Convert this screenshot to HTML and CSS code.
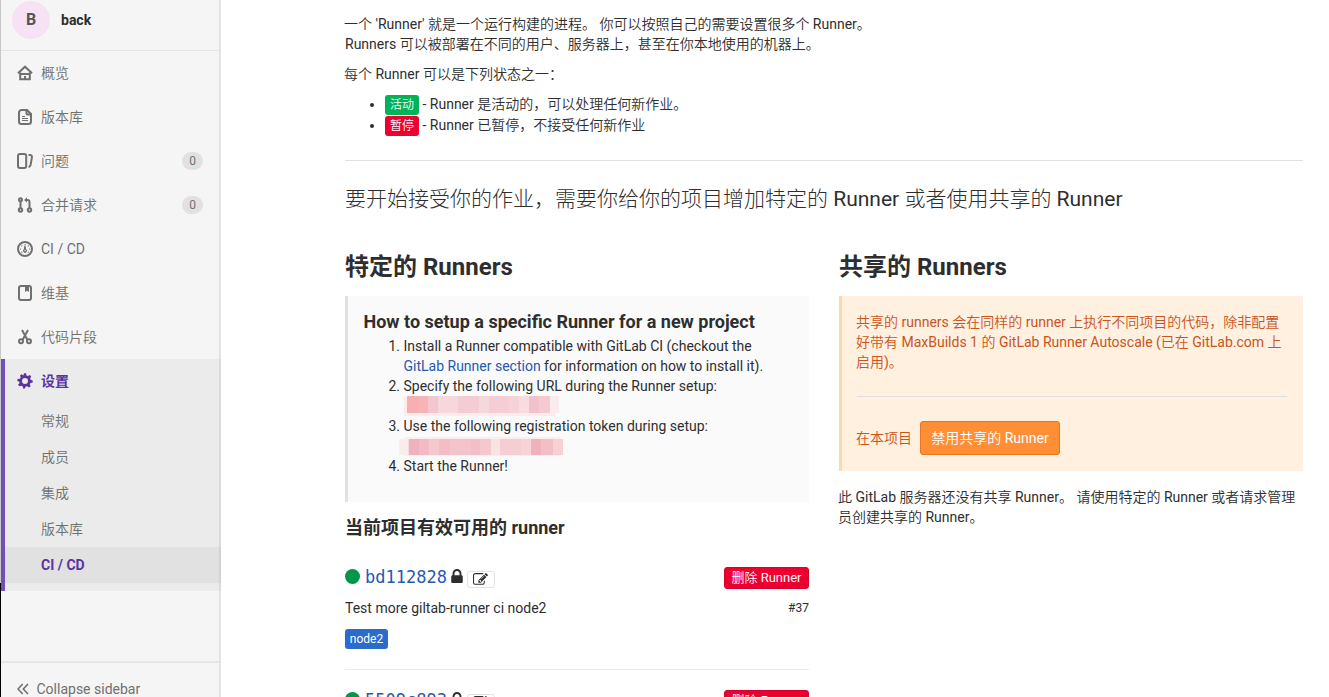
FILE: index.html
```html
<!DOCTYPE html>
<html lang="zh-CN">
<head>
<meta charset="utf-8">
<title>CI / CD</title>
<link rel="stylesheet" href="styles.css">
</head>
<body>
<div class="page">
  <div class="edge"></div>
  <aside class="sidebar">
    <div class="context"><span class="avatar">B</span><strong>back</strong></div>
    <nav class="nav">
      <a class="item"><svg class="icon" viewBox="0 0 16 16"><path d="M1 8.200 8 1.700l7 6.500M3.200 7.500v6.800h9.600V7.500M3.200 9h9.600M8 11v3"/></svg><span>概览</span></a>
      <a class="item"><svg class="icon" viewBox="0 0 16 16"><path d="M4 1h6l4 4v7.500a2.500 2.500 0 0 1-2.500 2.500h-7A2.500 2.500 0 0 1 2 12.500V3.500A2.500 2.500 0 0 1 4.500 1zM9.500 1v3.500a1 1 0 0 0 1 1H14"/><path class="thin" d="M5 7.500h3M5 9.500h6M5 11.500h6"/></svg><span>版本库</span></a>
      <a class="item"><svg class="icon" viewBox="0 0 16 16"><rect x="1" y="1" width="8.200" height="14" rx="2"/><path d="M11.500 2h1.700q2 .3 1.700 2.300l-1.400 8q-.5 1.700-2 1.700"/></svg><span>问题</span><b class="badge">0</b></a>
      <a class="item"><svg class="icon" viewBox="0 0 16 16"><circle cx="3.500" cy="2.700" r="1.500"/><circle cx="3.500" cy="13" r="1.700"/><circle cx="12.500" cy="13" r="1.700"/><path d="M3.500 4v7.500M12.500 11.500V5q0-2-2-2H8.500"/><path class="solid" d="M7 3 10 .5v5z"/></svg><span>合并请求</span><b class="badge">0</b></a>
      <a class="item"><svg class="icon" viewBox="0 0 16 16"><circle cx="8" cy="8" r="7"/><path class="dots" d="M8 3.500h.1M4.800 4.800h.1M11.200 4.800h.1M3.500 8h.1M12.500 8h.1M4.800 11.200h.1M11.200 11.200h.1"/><path class="solid" d="M7.400 4.500h1.200l.5 3.600a2 2 0 1 1-2.200 0z"/><circle class="hole" cx="8" cy="9.500" r=".7"/></svg><span>CI / CD</span></a>
      <a class="item"><svg class="icon" viewBox="0 0 16 16"><rect x="2" y="1" width="12" height="14" rx="2"/><path class="solid" d="M8 1.500h4V7l-2-1.300L8 7z"/></svg><span>维基</span></a>
      <a class="item"><svg class="icon" viewBox="0 0 16 16"><circle cx="4" cy="12.200" r="2"/><circle cx="12" cy="12.200" r="2"/><path d="M5 1 10.500 11M11 1 5.500 11"/></svg><span>代码片段</span></a>
      <div class="active-group">
        <a class="item current"><svg class="icon gear" viewBox="0 0 16 16"><path d="M6.500 2.500 7 .3h2l.5 2.200 1.300.6 2.100-1 1.300 1.400-1.100 2 .5 1.200 2.100.7v2l-2.200.5-.7 1.300.8 2.100-1.600 1.200-1.800-1.300-1.500.3-.8 2H6.100l-.5-2.200-1.300-.6-2.200.6-1-1.700 1.500-1.600-.2-1.300L.3 7.900l.3-2 2.300-.2.800-1.100L3 2.400 4.700 1.300z"/><circle class="gear-hole" cx="8" cy="8" r="3"/></svg><span>设置</span></a>
        <a class="sub">常规</a>
        <a class="sub">成员</a>
        <a class="sub">集成</a>
        <a class="sub">版本库</a>
        <a class="sub selected">CI / CD</a>
      </div>
    </nav>
    <div class="collapse"><svg class="icon chevrons" viewBox="0 0 12 12"><path d="M5.700 1 1 6l4.700 5M11 1 6.300 6l4.700 5"/></svg><span>Collapse sidebar</span></div>
  </aside>
  <main class="content">
    <p class="para"><span class="line l1">一个 'Runner' 就是一个运行构建的进程。 你可以按照自己的需要设置很多个 Runner。</span><span class="line">Runners 可以被部署在不同的用户、服务器上，甚至在你本地使用的机器上。</span></p>
    <p class="para"><span class="line l3">每个 Runner 可以是下列状态之一：</span></p>
    <ul class="states">
      <li><span class="label green">活动</span> - Runner 是活动的，可以处理任何新作业。</li>
      <li><span class="label red">暂停</span> - Runner 已暂停，不接受任何新作业</li>
    </ul>
    <h4 class="lead">要开始接受你的作业，需要你给你的项目增加特定的 Runner 或者使用共享的 Runner</h4>
    <div class="columns">
      <section>
        <h3 class="title">特定的 Runners</h3>
        <div class="callout">
          <h4 class="how">How to setup a specific Runner for a new project</h4>
          <ol class="steps">
            <li>Install a Runner compatible with GitLab CI (checkout the<br><a class="link">GitLab Runner section</a> for information on how to install it).</li>
            <li>Specify the following URL during the Runner setup:<div class="mask url"></div></li>
            <li>Use the following registration token during setup:<div class="mask token"></div></li>
            <li>Start the Runner!</li>
          </ol>
        </div>
        <h4 class="available">当前项目有效可用的 runner</h4>
        <div class="runner">
          <div class="runner-head"><i class="dot"></i><a class="hash">bd112828</a><svg class="lock" viewBox="0 0 1152 1408"><path d="M320 640h512V448q0-106-75-181t-181-75-181 75-75 181v192zm832 96v576q0 40-28 68t-68 28H96q-40 0-68-28t-28-68V736q0-40 28-68t68-28h32V448q0-184 132-316T576 0t316 132 132 316v192h32q40 0 68 28t28 68z"/></svg><a class="edit"><svg viewBox="0 0 1792 1792"><path d="M888 1184l116-116-152-152-116 116v56h96v96h56zm440-720q-16-16-33 1l-350 350q-17 17-1 33t33-1l350-350q17-17 1-33zm80 594v190q0 119-84.500 203.500t-203.500 84.500h-832q-119 0-203.500-84.500t-84.500-203.500v-832q0-119 84.500-203.500t203.500-84.500h832q63 0 117 25 15 7 18 23 3 17-9 29l-49 49q-14 14-32 8-23-6-45-6h-832q-66 0-113 47t-47 113v832q0 66 47 113t113 47h832q66 0 113-47t47-113v-126q0-13 9-22l64-64q15-15 35-7t20 29zm-96-738l288 288-672 672h-288v-288zm444 132l-92 92-288-288 92-92q28-28 68-28t68 28l152 152q28 28 28 68t-28 68z"/></svg></a><a class="remove">删除 Runner</a></div>
          <div class="runner-desc"><span>Test more giltab-runner ci node2</span><small>#37</small></div>
          <span class="tag">node2</span>
        </div>
        <div class="runner">
          <div class="runner-head"><i class="dot"></i><a class="hash">5509c893</a><svg class="lock" viewBox="0 0 1152 1408"><path d="M320 640h512V448q0-106-75-181t-181-75-181 75-75 181v192zm832 96v576q0 40-28 68t-68 28H96q-40 0-68-28t-28-68V736q0-40 28-68t68-28h32V448q0-184 132-316T576 0t316 132 132 316v192h32q40 0 68 28t28 68z"/></svg><a class="edit"><svg viewBox="0 0 1792 1792"><path d="M888 1184l116-116-152-152-116 116v56h96v96h56zm440-720q-16-16-33 1l-350 350q-17 17-1 33t33-1l350-350q17-17 1-33zm80 594v190q0 119-84.500 203.500t-203.500 84.500h-832q-119 0-203.500-84.500t-84.500-203.500v-832q0-119 84.500-203.500t203.500-84.500h832q63 0 117 25 15 7 18 23 3 17-9 29l-49 49q-14 14-32 8-23-6-45-6h-832q-66 0-113 47t-47 113v832q0 66 47 113t113 47h832q66 0 113-47t47-113v-126q0-13 9-22l64-64q15-15 35-7t20 29zm-96-738l288 288-672 672h-288v-288zm444 132l-92 92-288-288 92-92q28-28 68-28t68 28l152 152q28 28 28 68t-28 68z"/></svg></a><a class="remove">删除 Runner</a></div>
        </div>
      </section>
      <section>
        <h3 class="title">共享的 Runners</h3>
        <div class="callout warning">
          <p class="warn-text"><span class="line w">共享的 runners 会在同样的 runner 上执行不同项目的代码，除非配置</span><span class="line w">好带有 MaxBuilds 1 的 GitLab Runner Autoscale (已在 GitLab.com 上</span><span class="line w">启用)。</span></p>
          <div class="toggle"><span class="w">在本项目</span><a class="disable">禁用共享的 Runner</a></div>
        </div>
        <p class="note"><span class="line n">此 GitLab 服务器还没有共享 Runner。 请使用特定的 Runner 或者请求管理</span><span class="line n">员创建共享的 Runner。</span></p>
      </section>
    </div>
  </main>
</div>
</body>
</html>
```
FILE: styles.css
```css
* { box-sizing: border-box; }
body { margin: 0; background: #fff; color: #2e2e2e; font: 14px/20px Roboto, "Noto Sans CJK SC DemiLight", "Noto Sans CJK SC", sans-serif; }
h3, h4, p, ul, ol { margin: 0; padding: 0; }
.page { display: flex; height: 697px; overflow: hidden; }
.edge { width: 1px; flex: none; background: linear-gradient(#c8c8c8 583px, #000 583px); }

.sidebar { width: 220px; flex: none; display: flex; flex-direction: column; background: #f5f5f5; box-shadow: inset -2px 0 0 #e4e4e4; color: #707070; }
.context { height: 51px; flex: none; display: flex; align-items: flex-start; padding-left: 11px; border-bottom: 1px solid #e5e5e5; margin-right: 2px; color: #2e2e2e; }
.context strong { margin: 10px 0 0 11px; font-weight: 700; }
.avatar { width: 38px; height: 38px; margin-top: 1px; border-radius: 50%; background: #f6e1f5; color: #555; font-size: 16px; font-weight: 700; line-height: 37px; text-align: center; }
.nav { height: 610px; flex: none; }
.item { height: 44px; display: flex; align-items: center; padding: 0 18px 0 16px; }
.item span { margin-left: 8px; }
.badge { margin-left: auto; min-width: 21px; height: 18px; border-radius: 9px; background: #e1e1e1; font-size: 12px; font-weight: 400; line-height: 18px; text-align: center; }
.icon { width: 16px; height: 16px; flex: none; fill: none; stroke: #707070; stroke-width: 2; }
.icon .thin { stroke-width: 1; }
.icon .solid { fill: #707070; stroke: none; }
.icon .dots { stroke-width: 1.200; stroke-linecap: round; }
.icon .hole { fill: #f5f5f5; stroke: none; }
.active-group { height: 232px; background: rgba(0, 0, 0, .04); border-left: 4px solid #6e4fbb; }
.active-group .item { padding-left: 12px; }
.current, .selected { color: #5b33a0; font-family: Roboto, "Noto Sans CJK SC", sans-serif; font-weight: 700; }
.gear { fill: #5b33a0; stroke: none; }
.gear-hole { fill: #ebebeb; }
.sub { display: block; height: 36px; padding-left: 36px; line-height: 36px; }
.selected { background: rgba(0, 0, 0, .04); }
.collapse { height: 54px; flex: none; display: flex; align-items: center; gap: 7.500px; padding: 0 0 0 16px; margin-right: 2px; border-top: 2px solid #e5e5e5; }
.chevrons { width: 12px; height: 12px; stroke-width: 1.600; }

.content { width: 958px; flex: none; margin-left: 124px; padding-top: 14px; }
.para { margin-bottom: 10px; }
.line { display: block; white-space: nowrap; }
.l1, .l3, .n, .w { margin-left: -1px; }
.states { padding: 0 0 24px 40px; border-bottom: 1px solid #e1e1e1; }
.states li { height: 21px; white-space: nowrap; }
.label { display: inline-block; height: 20px; margin-top: 1px; margin-bottom: -1px; border-radius: 3px; color: #fff; font-size: 12px; line-height: 21px; vertical-align: top; width: 34px; text-align: center; }
.green { background: #00b35a; }
.red { background: #ed0030; }
.lead { margin-top: 26px; font-family: Roboto, "Noto Sans CJK SC Light", "Noto Sans CJK SC", sans-serif; font-size: 21px; font-weight: 400; line-height: 24px; white-space: nowrap; }
.columns { display: grid; grid-template-columns: 464px 464px; gap: 30px; margin-top: 40px; }
.title, .available { font-family: Roboto, "Noto Sans CJK SC", sans-serif; font-weight: 700; }
.title { font-size: 24px; line-height: 32px; }
.callout { height: 206px; margin-top: 13px; padding: 15px 16px 0 15.500px; border-left: 3px solid #e1e1e1; background: #fafafa; }
.how { font-size: 18px; line-height: 22px; font-weight: 700; }
.steps { padding: 3px 0 0 40px; white-space: nowrap; }
.link, .hash { color: #2659b0; }
.mask { width: 160px; height: 20px; margin-left: -4.500px; }
.url { background: linear-gradient(90deg, transparent 8px, #f6b0b4 8px 19px, #f7b4b7 19px 29px, #f2c7cd 29px 39px, #f6d8dc 39px 59px, #f4cdd4 59px 80px, #f5d8dc 80px 90px, #f5cdd4 90px 110px, #f6d3d8 110px 120px, #f9dcdf 120px 130px, #f2c1cb 130px 140px, #f4c9cf 140px 151px, #f9ecec 151px) 0 0 / 160px 17px no-repeat, linear-gradient(#fdecea, #fdecea) 5px 1px / 152px 19px no-repeat; }
.token { width: 164px; background: linear-gradient(90deg, #f9ecec 9px, #f6dadd 9px 10px, #eeb2bf 10px 20px, #f1bac5 20px 30px, #f3c9cf 30px 40px, #f2bdc7 40px 51px, #f3c4cc 51px 72px, #f2bec8 72px 81px, #f5c8cf 81px 92px, #f8e2e4 92px 101px, #f5ced3 101px 122px, #f6d3d7 122px 132px, #efb1bc 132px 142px, #f3bfc6 142px 154px, #f6d1d5 154px) 0 3px / 164px 16px no-repeat, linear-gradient(#fdecea, #fdecea) 6px 1px / 156px 19px no-repeat; }
.available { margin-top: 15px; font-size: 18px; line-height: 22px; }
.runner { height: 123px; border-bottom: 1px solid #ebebeb; }
.available + .runner { margin-top: 8px; }
.runner-head { height: 40px; padding-top: 19px; display: flex; align-items: flex-start; }
.dot { width: 15px; height: 15px; margin: 3px 5px 0 0; border-radius: 50%; background: #00964b; }
.hash { margin-top: 1px; font: 17px/20px "DejaVu Sans Mono", monospace; }
.lock { width: 12px; height: 14px; margin: 3px 4px 0; fill: #2e2e2e; }
.edit { width: 28px; height: 17px; margin-top: 5px; border: 1px solid #e3e3e3; border-radius: 3px; display: flex; justify-content: center; align-items: center; }
.edit svg { width: 15px; height: 15px; fill: #2e2e2e; }
.remove { width: 85px; height: 22px; margin: 1px 0 0 auto; border: 1px solid #cf0530; border-radius: 3px; background: #ed0030; color: #fff; font-size: 13px; line-height: 20px; text-align: center; white-space: nowrap; }
.runner-desc { display: flex; justify-content: space-between; margin-top: 11px; }
.runner-desc small { font-size: 12px; line-height: 21px; }
.tag { display: block; width: 43px; height: 20px; margin-top: 10px; border-radius: 3px; background: #2b6bcb; color: #fff; font-size: 12px; line-height: 20px; text-align: center; }
.warning { height: 175px; padding-top: 16px; padding-left: 15px; border-color: #fcd9a8; background: #fff0e0; color: #c9541c; }
.warn-text { padding-bottom: 24px; border-bottom: 1px solid #dfdfdf; }
.toggle { display: flex; align-items: center; gap: 8px; margin-top: 24px; }
.disable { width: 140px; height: 34px; border: 1px solid #e87424; border-radius: 3px; background: #ff8e35; color: #fff; line-height: 32px; text-align: center; white-space: nowrap; }
.note { margin-top: 16px; }
```
